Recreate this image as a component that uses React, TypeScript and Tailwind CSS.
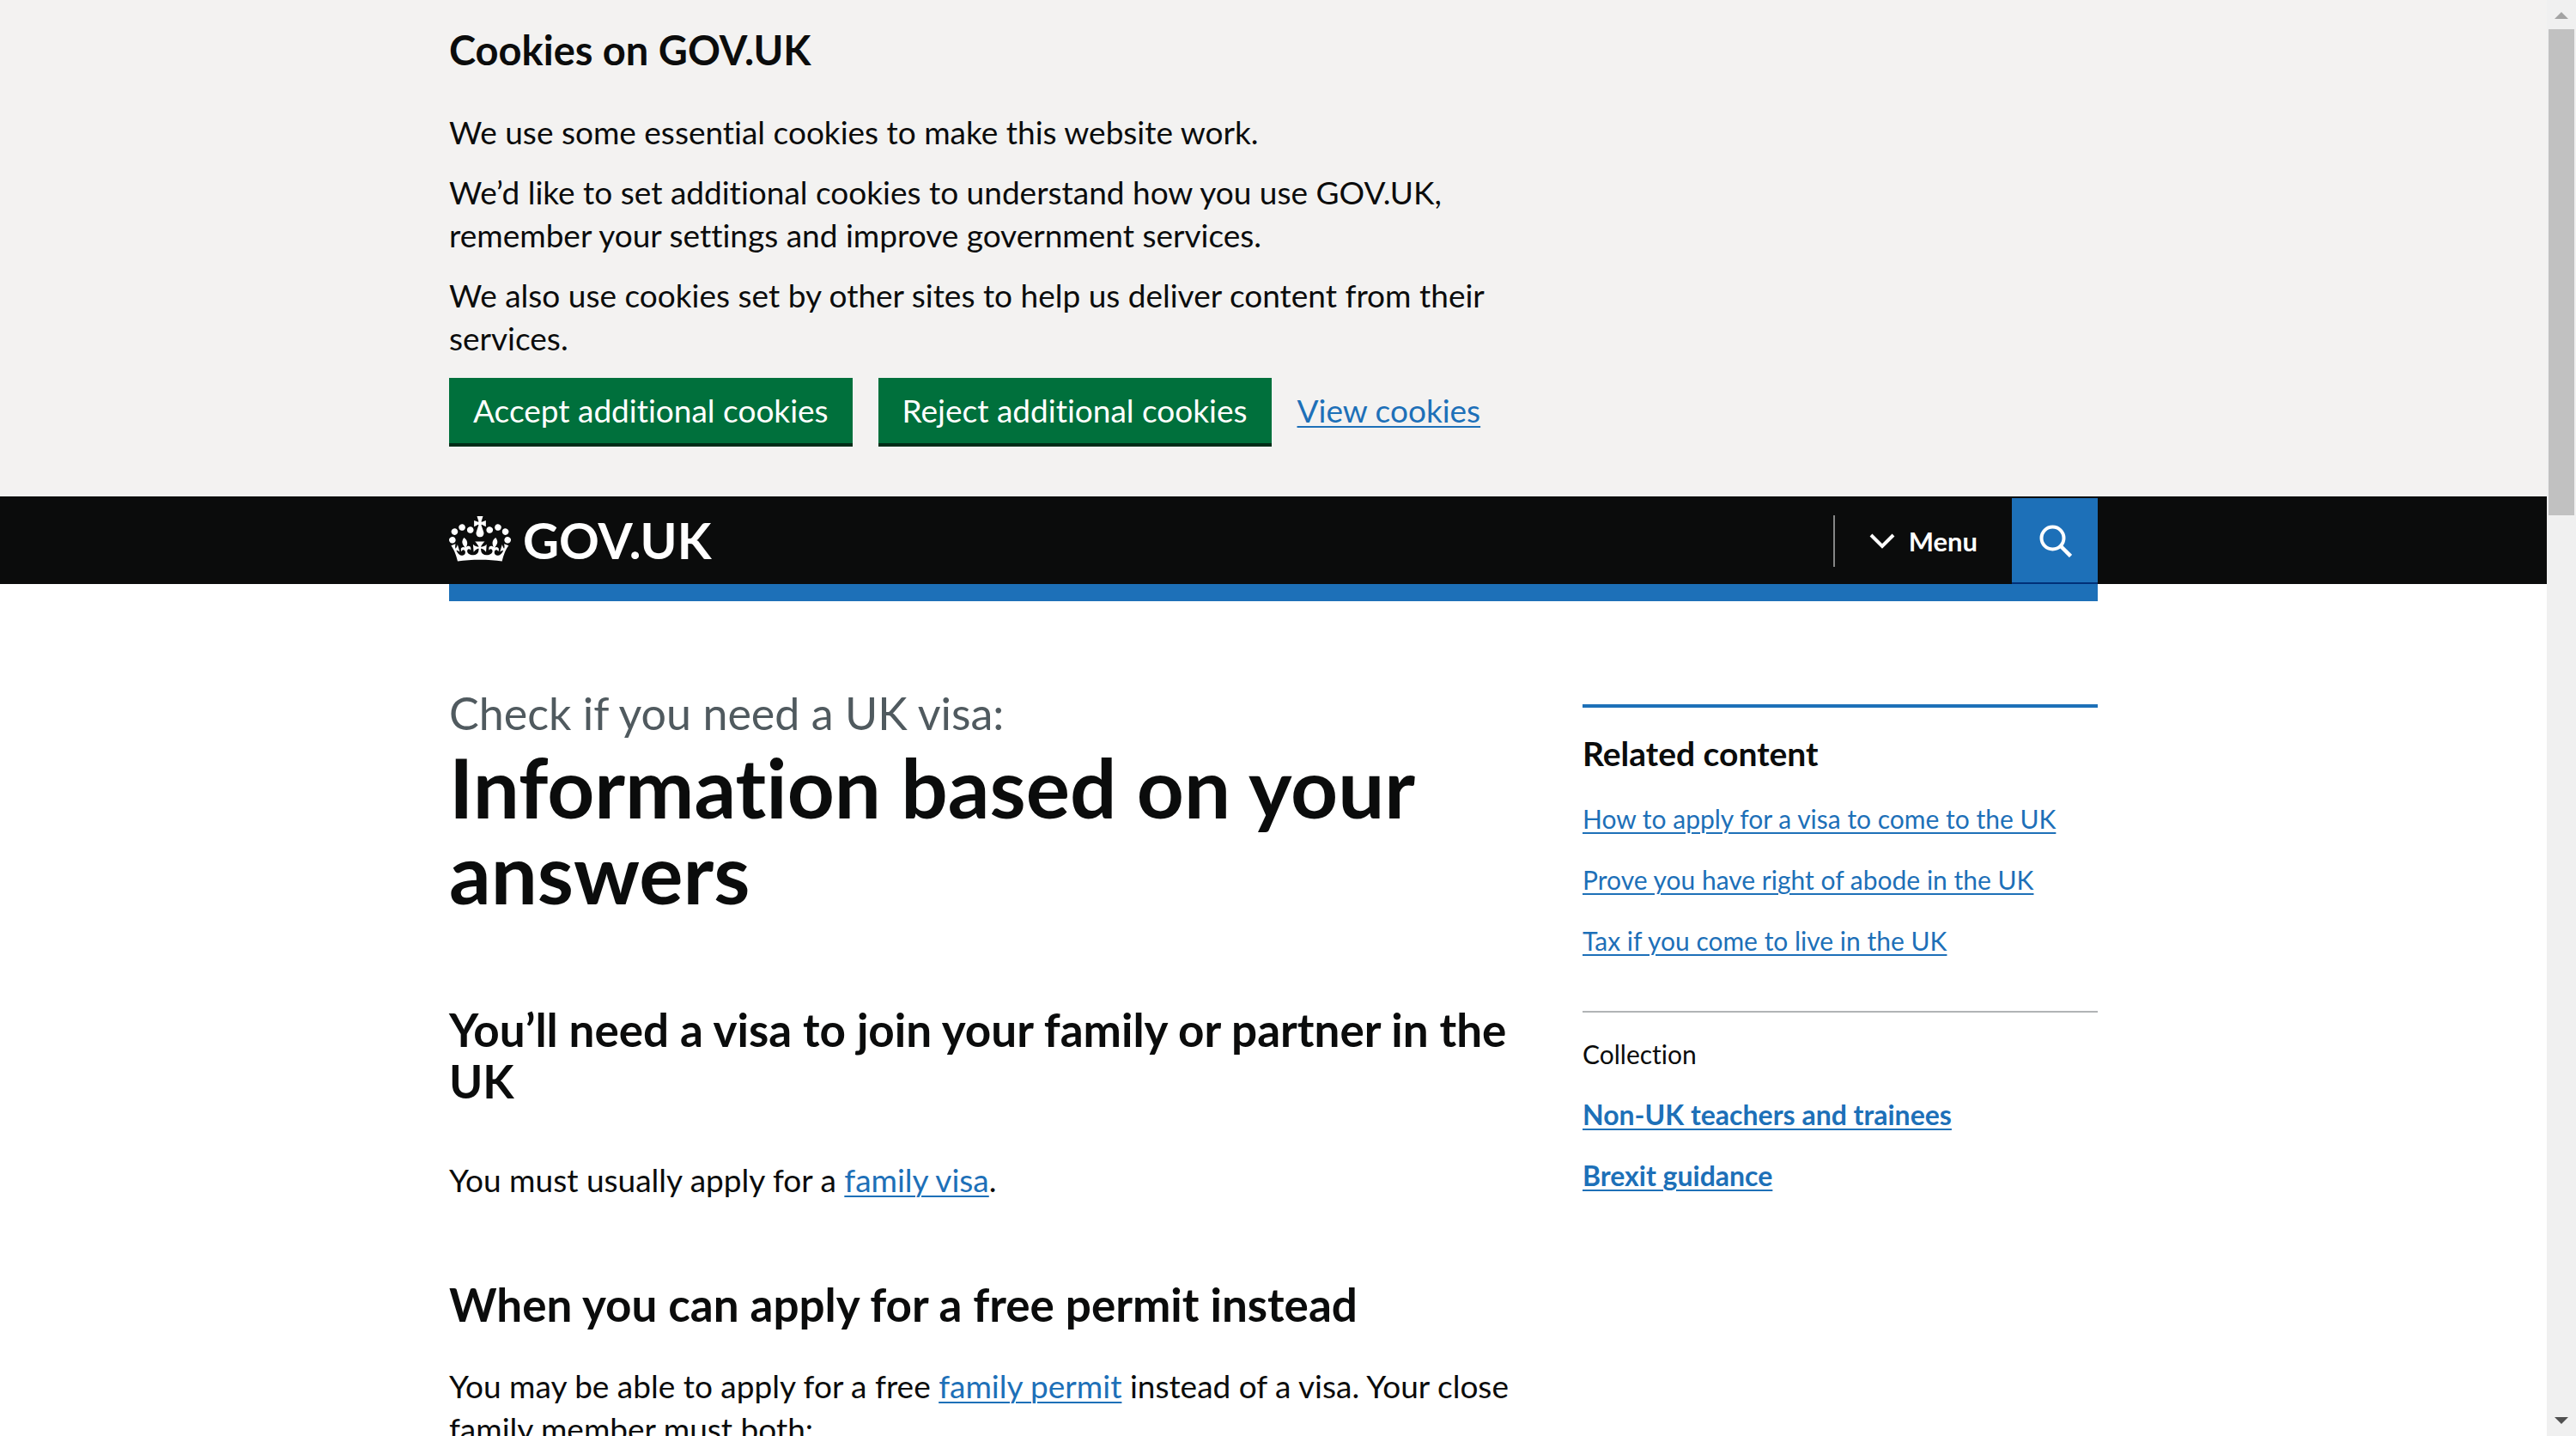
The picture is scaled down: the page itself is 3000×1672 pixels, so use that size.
import type { ReactNode } from "react";

function Crown() {
  return (
    <svg
      aria-hidden="true"
      viewBox="0 0 132 97"
      className="mb-1 h-[53px] w-[72px]"
      fill="currentColor"
    >
      <path
        fillRule="evenodd"
        d="M25 30.2c3.5 1.5 7.7-.2 9.1-3.7 1.5-3.6-.2-7.8-3.9-9.2-3.6-1.4-7.6.3-9.1 3.9-1.4 3.5.3 7.5 3.9 9zM9 39.5c3.6 1.5 7.8-.2 9.2-3.7 1.5-3.6-.2-7.8-3.9-9.1-3.6-1.5-7.6.2-9.1 3.8-1.4 3.5.3 7.5 3.8 9zM4.4 57.2c3.5 1.5 7.7-.2 9.1-3.8 1.5-3.6-.2-7.7-3.9-9.1-3.5-1.5-7.6.3-9.1 3.8-1.4 3.5.3 7.6 3.9 9.1zm38.3-21.4c3.5 1.5 7.7-.2 9.1-3.8 1.5-3.6-.2-7.7-3.9-9.1-3.6-1.5-7.6.3-9.1 3.8-1.3 3.6.4 7.7 3.9 9.1zm64.4-5.6c-3.6 1.5-7.8-.2-9.1-3.7-1.5-3.6.2-7.8 3.8-9.2 3.6-1.4 7.7.3 9.2 3.9 1.3 3.5-.4 7.5-3.9 9zm15.9 9.3c-3.6 1.5-7.7-.2-9.1-3.7-1.5-3.6.2-7.8 3.7-9.1 3.6-1.5 7.7.2 9.2 3.8 1.5 3.5-.3 7.5-3.8 9zm4.7 17.7c-3.6 1.5-7.8-.2-9.2-3.8-1.5-3.6.2-7.7 3.9-9.1 3.6-1.5 7.7.3 9.2 3.8 1.3 3.5-.4 7.6-3.9 9.1zM89.3 35.8c-3.6 1.5-7.8-.2-9.2-3.8-1.4-3.6.2-7.7 3.9-9.1 3.6-1.5 7.7.3 9.2 3.8 1.4 3.6-.3 7.7-3.9 9.1zM69.7 17.7l8.9 4.7V9.3l-8.9 2.8c-.2-.3-.5-.6-.9-.9L72.4 0H59.6l3.5 11.2c-.3.3-.6.5-.9.9l-8.8-2.8v13.1l8.8-4.7c.3.3.6.7.9.9l-5 15.4v.1c-.2.8-.4 1.6-.4 2.4 0 4.1 3.1 7.5 7 8.1h.2c.3 0 .7.1 1 .1.4 0 .7 0 1-.1h.2c4-.6 7.1-4.1 7.1-8.1 0-.8-.1-1.7-.4-2.4V34l-5.1-15.4c.4-.2.7-.6 1-.9zM66 92.8c16.9 0 32.8 1.1 47.1 3.2 4-16.9 8.9-26.7 14-33.5l-9.6-3.4c1 4.9 1.1 7.2 0 10.2-1.5-1.4-3-4.3-4.2-8.7L108.6 76c2.8-2 5-3.2 7.5-3.3-4.4 9.4-10 11.9-13.6 11.2-4.3-.8-6.3-4.6-5.6-7.9 1-4.7 5.7-5.9 8-.5 4.3-8.7-3-11.4-7.6-8.8 7.1-7.2 7.9-13.5 2.1-21.1-8 6.1-8.1 12.3-4.5 20.8-4.7-5.4-12.1-2.5-9.5 6.2 3.4-5.2 7.9-2 7.2 3.1-.6 4.3-6.4 7.8-13.5 7.2-10.3-.9-10.9-8-11.2-13.8 2.5-.5 7.1 1.8 11 7.3L80.2 60c-4.1 4.4-8 5.3-12.3 5.4 1.4-4.4 8-11.6 8-11.6H55.5s6.4 7.2 7.9 11.6c-4.2-.1-8-1-12.3-5.4l1.4 16.4c3.9-5.5 8.5-7.7 10.9-7.3-.3 5.8-.9 12.8-11.1 13.8-7.2.6-12.9-2.9-13.5-7.2-.7-5 3.8-8.3 7.1-3.1 2.7-8.7-4.6-11.6-9.4-6.2 3.7-8.5 3.6-14.7-4.6-20.8-5.8 7.6-5 13.9 2.2 21.1-4.7-2.6-11.9.1-7.7 8.8 2.3-5.5 7.1-4.2 8.1.5.7 3.3-1.3 7.1-5.7 7.9-3.5.7-9-1.8-13.5-11.2 2.5.1 4.7 1.3 7.5 3.3l-4.7-15.4c-1.2 4.4-2.7 7.2-4.3 8.7-1.1-3-.9-5.3 0-10.2l-9.5 3.4c5 6.9 9.9 16.7 14 33.5 14.8-2.1 30.8-3.2 47.7-3.2z"
      />
    </svg>
  );
}

function Container({ className = "", children }: { className?: string; children?: ReactNode }) {
  return <div className={`mx-auto w-full max-w-[1920px] ${className}`}>{children}</div>;
}

function Link({ children }: { children: ReactNode }) {
  return (
    <a href="#" className="text-[#1d70b8] underline decoration-2 underline-offset-4">
      {children}
    </a>
  );
}

function GreenButton({ children }: { children: ReactNode }) {
  return (
    <button
      type="button"
      className="h-20 border-b-4 border-[#002d18] bg-[#00703c] px-7 text-white"
    >
      {children}
    </button>
  );
}

function CookieBanner() {
  return (
    <section aria-label="Cookies on GOV.UK" className="bg-[#f3f2f1] pt-7 pb-[58px]">
      <Container className="grid grid-cols-3 gap-x-[60px]">
        <div className="col-span-2">
          <h2 className="mb-[41px] text-[47px] leading-[60px] font-bold">Cookies on GOV.UK</h2>
          <div className="flex flex-col gap-5">
            <p>We use some essential cookies to make this website work.</p>
            <p>
              We’d like to set additional cookies to understand how you use GOV.UK, remember your
              settings and improve government services.
            </p>
            <p>
              We also use cookies set by other sites to help us deliver content from their services.
            </p>
          </div>
          <div className="mt-[21px] flex items-baseline gap-[30px]">
            <GreenButton>Accept additional cookies</GreenButton>
            <GreenButton>Reject additional cookies</GreenButton>
            <Link>View cookies</Link>
          </div>
        </div>
      </Container>
    </section>
  );
}

function Header() {
  return (
    <header>
      <div className="bg-[#0b0c0c] text-white">
        <Container className="flex h-[102px] items-center justify-between">
          <a href="#" className="flex items-center gap-[14px]">
            <Crown />
            <span className="text-[58px] leading-[60px] font-bold">GOV.UK</span>
          </a>
          <div className="flex h-full items-center pt-0.5">
            <button
              type="button"
              className="flex h-[60px] items-center gap-4 border-l-2 border-[#858686] px-10 text-[31px] leading-[40px] font-bold"
            >
              <svg
                aria-hidden="true"
                viewBox="0 0 30 20"
                className="h-5 w-[30px]"
                fill="none"
                stroke="currentColor"
                strokeWidth="4"
              >
                <path d="M2 3 15 16 28 3" />
              </svg>
              Menu
            </button>
            <button
              type="button"
              aria-label="Search GOV.UK"
              className="flex h-full w-[100px] items-center justify-center border-b-2 border-[#003078] bg-[#1d70b8]"
            >
              <svg
                aria-hidden="true"
                viewBox="0 0 40 40"
                className="h-10 w-10"
                fill="none"
                stroke="currentColor"
                strokeWidth="4"
              >
                <circle cx="17.5" cy="17.5" r="13" />
                <path d="M26.5 26.5 38.5 38.5" strokeWidth="4.5" />
              </svg>
            </button>
          </div>
        </Container>
      </div>
      <Container className="h-5 bg-[#1d70b8]" />
    </header>
  );
}

function Article() {
  return (
    <article className="col-span-2">
      <div className="mb-1.5 text-[52px] leading-[60px] text-[#505a5f]">
        Check if you need a UK visa:
      </div>
      <h1 className="mb-[103px] text-[96px] leading-[100px] font-bold">
        Information based on your answers
      </h1>
      <h2 className="mb-[60px] text-[53px] leading-[60px] font-bold">
        You’ll need a visa to join your family or partner in the UK
      </h2>
      <p className="mb-[90px]">
        You must usually apply for a <Link>family visa</Link>.
      </p>
      <h2 className="mb-10 text-[53px] leading-[60px] font-bold">
        When you can apply for a free permit instead
      </h2>
      <p>
        You may be able to apply for a free <Link>family permit</Link> instead of a visa. Your close
        family member must both:
      </p>
    </article>
  );
}

const related = [
  "How to apply for a visa to come to the UK",
  "Prove you have right of abode in the UK",
  "Tax if you come to live in the UK",
];
const collections = ["Non-UK teachers and trainees", "Brexit guidance"];

function Sidebar() {
  return (
    <aside className="mt-5 border-t-4 border-[#1d70b8] pt-7 text-[30px] leading-[40px]">
      <h2 className="mb-[31px] text-[39px] leading-[50px] font-bold">Related content</h2>
      <ul className="flex flex-col gap-[31px]">
        {related.map((t) => (
          <li key={t}>
            <Link>{t}</Link>
          </li>
        ))}
      </ul>
      <div className="mt-[62px] border-t-2 border-[#b1b4b6] pt-7">
        <h3 className="mb-[31px]">Collection</h3>
        <ul className="flex flex-col gap-[31px] text-[32px] font-bold">
          {collections.map((t) => (
            <li key={t}>
              <Link>{t}</Link>
            </li>
          ))}
        </ul>
      </div>
    </aside>
  );
}

function ScrollBar() {
  return (
    <div
      aria-hidden="true"
      className="flex w-[34px] shrink-0 flex-col items-center justify-between bg-[#f0f0f0]"
    >
      <div className="flex w-full flex-col items-center">
        <svg viewBox="0 0 34 34" className="h-[34px] w-[34px]" fill="#a3a3a3">
          <path d="M9 22 17 14 25 22Z" />
        </svg>
        <div className="h-[566px] w-[30px] bg-[#c1c1c1]" />
      </div>
      <svg viewBox="0 0 34 34" className="h-[34px] w-[34px]" fill="#505050">
        <path d="M9 12 17 20 25 12Z" />
      </svg>
    </div>
  );
}

export default function App() {
  return (
    <div className="flex h-screen overflow-hidden bg-white font-['Lato',sans-serif] text-[37px] leading-[50px] text-[#0b0c0c] [font-variant-ligatures:none]">
      <div className="min-w-0 flex-1">
        <CookieBanner />
        <Header />
        <main>
          <Container className="grid grid-cols-3 gap-x-[60px] pt-[100px]">
            <Article />
            <Sidebar />
          </Container>
        </main>
      </div>
      <ScrollBar />
    </div>
  );
}
